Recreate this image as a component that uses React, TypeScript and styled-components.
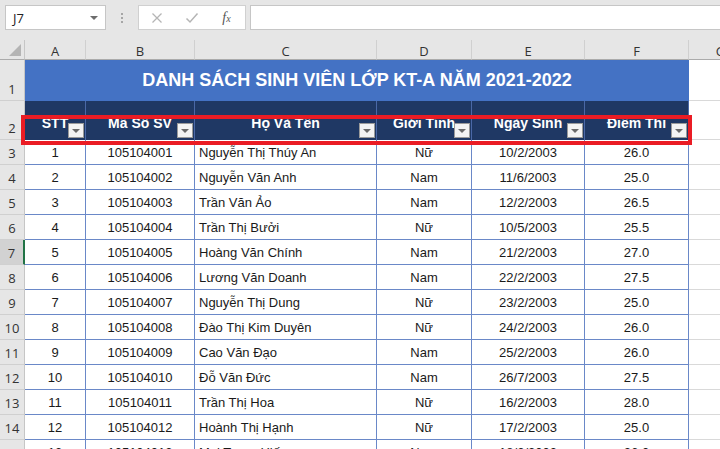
import styled, { createGlobalStyle } from "styled-components";

const GlobalStyle = createGlobalStyle`
  html, body {
    margin: 0;
    padding: 0;
    overflow: hidden;
    background: #ffffff;
  }
  body {
    font-family: "Liberation Sans", Arial, sans-serif;
  }
`;

const FormulaBar = styled.div`
  display: flex;
  align-items: flex-start;
  height: 40px;
  box-sizing: border-box;
  padding: 5px 0 0 5px;
  background: #e6e6e6;
`;

const NameBox = styled.div`
  position: relative;
  width: 101px;
  height: 25px;
  box-sizing: border-box;
  border: 1px solid #c6c6c6;
  background: #fff;
  display: flex;
  align-items: center;
  padding-left: 7px;
  font: 13px "Open Sans", sans-serif;
  color: #222;

  &::after {
    content: "";
    position: absolute;
    right: 7px;
    top: 10px;
    border-left: 4px solid transparent;
    border-right: 4px solid transparent;
    border-top: 4px solid #6d6d6d;
  }
`;

const Dots = styled.div`
  width: 32px;
  height: 25px;
  display: flex;
  flex-direction: column;
  align-items: center;
  justify-content: center;
  gap: 2px;

  span {
    width: 2px;
    height: 2px;
    background: #a6a6a6;
  }
`;

const FuncBox = styled.div`
  width: 108px;
  height: 25px;
  box-sizing: border-box;
  border: 1px solid #d0d0d0;
  background: #fff;
  display: flex;
  align-items: center;
`;

const FuncSlot = styled.div`
  width: 35px;
  display: flex;
  justify-content: center;
  align-items: center;
`;

const Fx = styled.span`
  font-family: "Liberation Serif", "Times New Roman", serif;
  font-style: italic;
  font-size: 14px;
  color: #555;

  small {
    font-size: 10px;
  }
`;

const FormulaInput = styled.div`
  flex: 1;
  height: 25px;
  margin-left: 4px;
  box-sizing: border-box;
  border: 1px solid #c6c6c6;
  border-right: none;
  background: #fff;
`;

const Sheet = styled.div`
  position: relative;
  display: grid;
  grid-template-columns: 25px 61px 109px 182px 95px 113px 104px 64px 1fr;
  grid-template-rows: 20px 41px 39px;
  grid-auto-rows: 25px;
`;

const Corner = styled.div`
  position: relative;
  background: #e6e6e6;
  border-right: 1px solid #c6c6c6;
  border-bottom: 1px solid #ababab;

  &::after {
    content: "";
    position: absolute;
    right: 3px;
    bottom: 3px;
    border-left: 12px solid transparent;
    border-bottom: 12px solid #b4b4b4;
  }
`;

const ColHead = styled.div`
  background: #e6e6e6;
  border-bottom: 1px solid #ababab;
  border-right: 1px solid #d0d0d0;
  display: flex;
  align-items: center;
  justify-content: center;
  padding-top: 2px;
  box-sizing: border-box;
  font: 13px "Open Sans", sans-serif;
  color: #333;
  overflow: hidden;
`;

const RowHead = styled.div<{ $active?: boolean }>`
  background: ${(p) => (p.$active ? "#d2d2d2" : "#e6e6e6")};
  border-bottom: 1px solid #d0d0d0;
  border-right: ${(p) => (p.$active ? "2px solid #217346" : "1px solid #c6c6c6")};
  display: flex;
  align-items: flex-end;
  justify-content: center;
  padding-bottom: 3px;
  box-sizing: border-box;
  font: 13px "Open Sans", sans-serif;
  line-height: 16px;
  color: #333;
`;

const TitleCell = styled.div`
  grid-column: span 6;
  background: #4472c4;
  display: flex;
  align-items: center;
  justify-content: center;
  font-weight: bold;
  font-size: 18px;
  color: #fff;
  padding-bottom: 1px;
`;

const HeadCell = styled.div`
  position: relative;
  background: #1f3864;
  border-right: 1px solid #4a68a6;
  box-sizing: border-box;
  display: flex;
  align-items: center;
  justify-content: center;
  padding-top: 4px;
  font-weight: bold;
  font-size: 14px;
  color: #fff;
  white-space: nowrap;
`;

const FilterButton = styled.span`
  position: absolute;
  right: 1px;
  bottom: 2px;
  width: 16px;
  height: 15px;
  box-sizing: border-box;
  background: #f3f3f3;
  border: 1px solid #9a9a9a;

  &::after {
    content: "";
    position: absolute;
    left: 3px;
    top: 5px;
    border-left: 4px solid transparent;
    border-right: 4px solid transparent;
    border-top: 4px solid #6a6a6a;
  }
`;

const DataCell = styled.div<{ $left?: boolean }>`
  border-right: 1px solid #6a88c8;
  border-bottom: 1px solid #6a88c8;
  box-sizing: border-box;
  display: flex;
  align-items: center;
  padding: 0 ${(p) => (p.$left ? "4px" : "0")};
  justify-content: ${(p) => (p.$left ? "flex-start" : "center")};
  font-size: 13px;
  color: #1a1a1a;
  white-space: nowrap;
  overflow: hidden;
`;

const BlankCell = styled.div`
  border-bottom: 1px solid #d9d9d9;
  border-right: 1px solid #d9d9d9;
`;

const Highlight = styled.div`
  position: absolute;
  left: 21px;
  top: 75px;
  width: 671px;
  height: 30px;
  box-sizing: border-box;
  border: 4px solid #ea1c24;
  pointer-events: none;
`;

const columns = ["A", "B", "C", "D", "E", "F", "G", ""];

const headers = ["STT", "Mã Số SV", "Họ Và Tên", "Giới Tính", "Ngày Sinh", "Điểm Thi"];

const students: [string, string, string, string, string][] = [
  ["105104001", "Nguyễn Thị Thúy An", "Nữ", "10/2/2003", "26.0"],
  ["105104002", "Nguyễn Văn Anh", "Nam", "11/6/2003", "25.0"],
  ["105104003", "Trần Văn Ảo", "Nam", "12/2/2003", "26.5"],
  ["105104004", "Trần Thị Bưởi", "Nữ", "10/5/2003", "25.5"],
  ["105104005", "Hoàng Văn Chính", "Nam", "21/2/2003", "27.0"],
  ["105104006", "Lương Văn Doanh", "Nam", "22/2/2003", "27.5"],
  ["105104007", "Nguyễn Thị Dung", "Nữ", "23/2/2003", "25.0"],
  ["105104008", "Đào Thị Kim Duyên", "Nữ", "24/2/2003", "26.0"],
  ["105104009", "Cao Văn Đạo", "Nam", "25/2/2003", "26.0"],
  ["105104010", "Đỗ Văn Đức", "Nam", "26/7/2003", "27.5"],
  ["105104011", "Trần Thị Hoa", "Nữ", "16/2/2003", "28.0"],
  ["105104012", "Hoành Thị Hạnh", "Nữ", "17/2/2003", "25.0"],
  ["105104013", "Mai Trọng Hiếu", "Nam", "18/2/2003", "26.0"],
];

const ACTIVE_ROW = 7;

export default function App() {
  return (
    <>
      <GlobalStyle />
      <FormulaBar>
        <NameBox>J7</NameBox>
        <Dots>
          <span />
          <span />
          <span />
        </Dots>
        <FuncBox>
          <FuncSlot>
            <svg width="12" height="12" viewBox="0 0 12 12">
              <path d="M1.5 1.5 L10.5 10.5 M10.5 1.5 L1.5 10.5" stroke="#b5b5b5" strokeWidth="1.3" fill="none" />
            </svg>
          </FuncSlot>
          <FuncSlot>
            <svg width="14" height="12" viewBox="0 0 14 12">
              <path d="M1.5 6.5 L5 10 L12.5 1.5" stroke="#b5b5b5" strokeWidth="1.5" fill="none" />
            </svg>
          </FuncSlot>
          <FuncSlot>
            <Fx>
              f<small>x</small>
            </Fx>
          </FuncSlot>
        </FuncBox>
        <FormulaInput />
      </FormulaBar>

      <Sheet>
        <Corner />
        {columns.map((c, i) => (
          <ColHead key={i}>{c}</ColHead>
        ))}

        <RowHead>1</RowHead>
        <TitleCell>DANH SÁCH SINH VIÊN LỚP KT-A NĂM 2021-2022</TitleCell>
        <BlankCell />
        <BlankCell />

        <RowHead>2</RowHead>
        {headers.map((h) => (
          <HeadCell key={h}>
            {h}
            <FilterButton />
          </HeadCell>
        ))}
        <BlankCell />
        <BlankCell />

        {students.map((s, i) => {
          const row = i + 3;
          return [
            <RowHead key={`h${row}`} $active={row === ACTIVE_ROW}>
              {row}
            </RowHead>,
            <DataCell key={`a${row}`}>{i + 1}</DataCell>,
            <DataCell key={`b${row}`}>{s[0]}</DataCell>,
            <DataCell key={`c${row}`} $left>
              {s[1]}
            </DataCell>,
            <DataCell key={`d${row}`}>{s[2]}</DataCell>,
            <DataCell key={`e${row}`}>{s[3]}</DataCell>,
            <DataCell key={`f${row}`}>{s[4]}</DataCell>,
            <BlankCell key={`g${row}`} />,
            <BlankCell key={`x${row}`} />,
          ];
        })}

        <Highlight />
      </Sheet>
    </>
  );
}
